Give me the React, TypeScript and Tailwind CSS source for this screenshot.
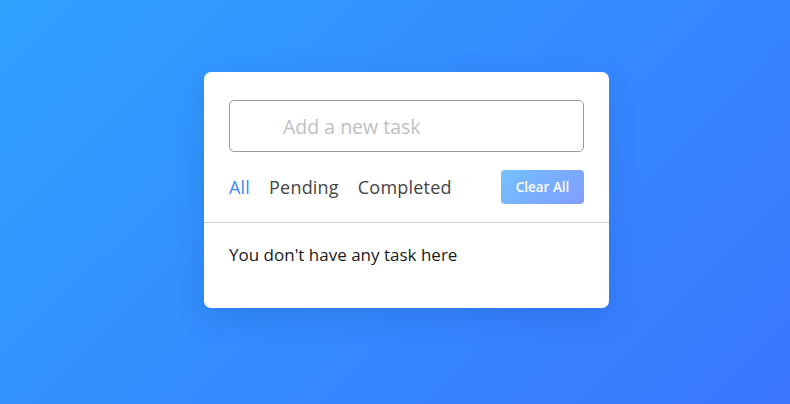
import { useState } from "react";

const filters = ["All", "Pending", "Completed"];

export default function App() {
	const [active, setActive] = useState("All");

	return (
		<div className="flex h-[404px] w-full items-start justify-center bg-[linear-gradient(135deg,#2fa1ff_0%,#3a76fe_100%)] pt-[72px] pl-[23px] font-['Open_Sans',sans-serif]">
			<div className="w-[405px] rounded-[7px] bg-white pt-[28px] pb-[41px] shadow-[0_10px_30px_rgba(0,40,120,0.15)]">
				{/* Task input */}
				<div className="px-[25px]">
					<input
						type="text"
						placeholder="Add a new task"
						className="h-[52px] w-full rounded-[5px] border border-[#999] pl-[53px] text-[19.5px] text-[#333] outline-none placeholder:text-[#bfbfbf]"
					/>
				</div>

				{/* Filters */}
				<div className="flex items-center justify-between border-b border-[#ccc] px-[25px] py-[18px]">
					<div className="flex gap-[19px] text-[18px] leading-[24px] tracking-[0.2px]">
						{filters.map(f => (
							<span
								key={f}
								onClick={() => setActive(f)}
								className={
									active === f
										? "cursor-pointer text-[#3c87ff]"
										: "cursor-pointer text-[#444]"
								}
							>
								{f}
							</span>
						))}
					</div>
					<button className="h-[34px] w-[83px] rounded-[4px] bg-[linear-gradient(135deg,#1798fb_0%,#2d5cfe_100%)] text-[13.5px] font-semibold text-white opacity-60">
						Clear All
					</button>
				</div>

				{/* Task list */}
				<p className="px-[25px] pt-[20px] text-[17px] leading-[24px] text-[#1a1a1a]">
					You don't have any task here
				</p>
			</div>
		</div>
	);
}
